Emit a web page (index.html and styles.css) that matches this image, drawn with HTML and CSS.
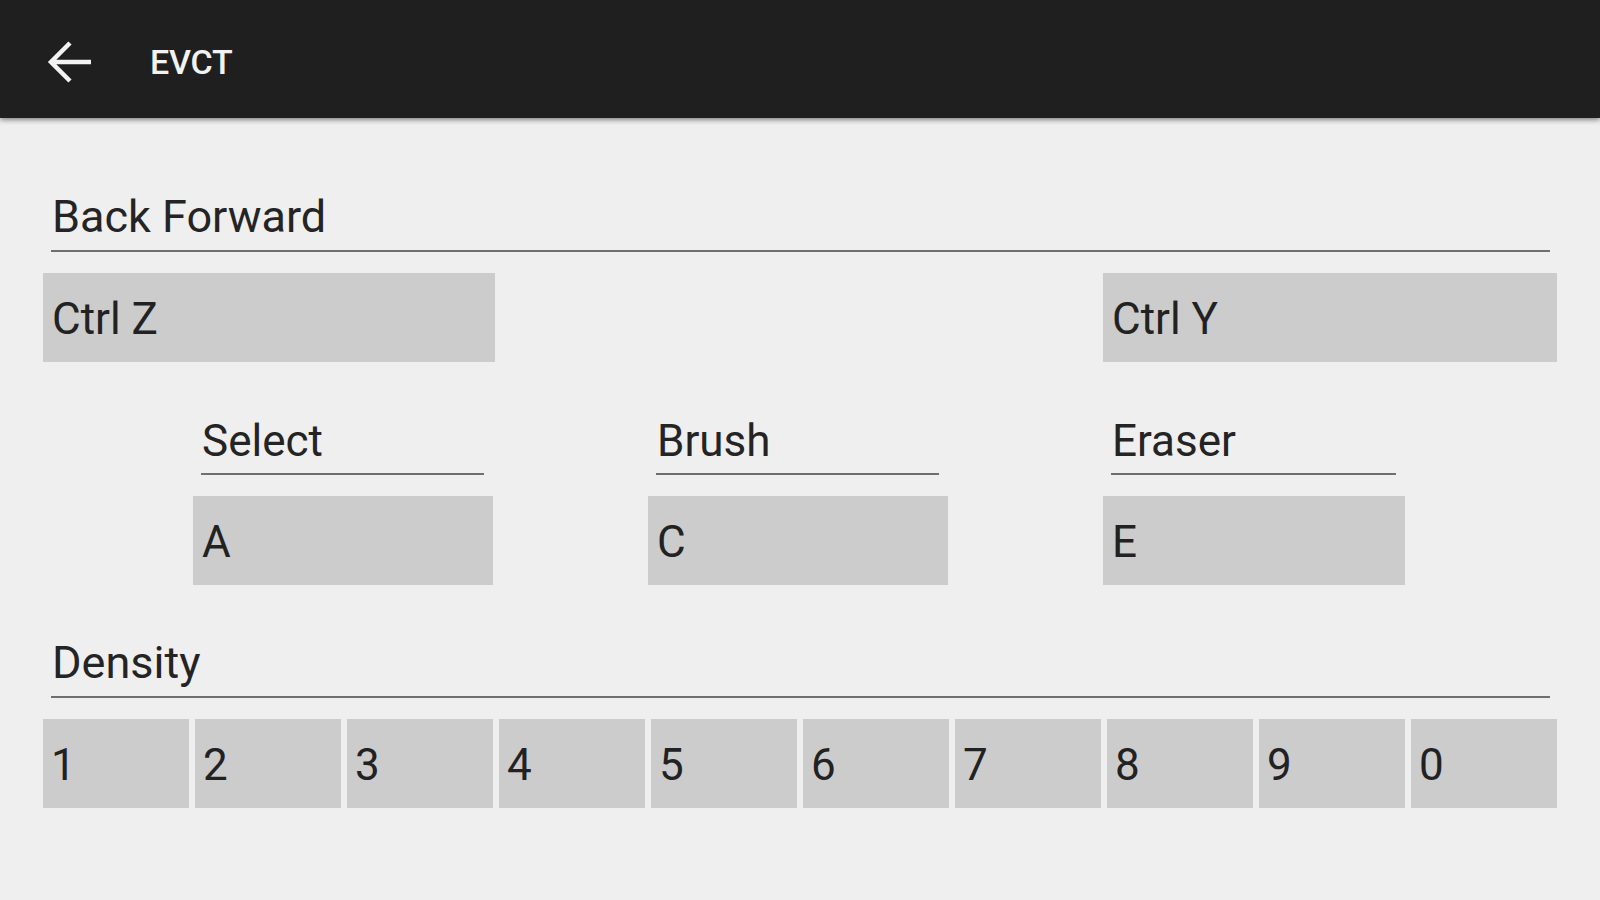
FILE: index.html
```html
<!DOCTYPE html>
<html lang="en">
<head>
<meta charset="utf-8">
<title>EVCT</title>
<link rel="stylesheet" href="styles.css">
</head>
<body>
<header class="appbar">
  <svg class="back" width="48" height="48" viewBox="0 0 48 48" aria-hidden="true">
    <path d="M46 24H6 M25 5L6 24L25 43" fill="none" stroke="#f2f2f2" stroke-width="4.5"/>
  </svg>
  <span class="title">EVCT</span>
</header>
<main class="content">
  <div class="label wide">Back Forward</div>
  <div class="row-pair">
    <div class="key key-ctrlz">Ctrl Z</div>
    <div class="key key-ctrly">Ctrl Y</div>
  </div>
  <div class="tools">
    <div class="tool">
      <div class="label small">Select</div>
      <div class="key">A</div>
    </div>
    <div class="tool">
      <div class="label small">Brush</div>
      <div class="key">C</div>
    </div>
    <div class="tool">
      <div class="label small">Eraser</div>
      <div class="key">E</div>
    </div>
  </div>
  <div class="label wide density">Density</div>
  <div class="digits">
    <div class="key">1</div>
    <div class="key">2</div>
    <div class="key">3</div>
    <div class="key">4</div>
    <div class="key">5</div>
    <div class="key">6</div>
    <div class="key">7</div>
    <div class="key">8</div>
    <div class="key">9</div>
    <div class="key">0</div>
  </div>
</main>
</body>
</html>
```
FILE: styles.css
```css
html, body {
  margin: 0;
  padding: 0;
}
body {
  width: 1600px;
  height: 900px;
  overflow: hidden;
  background: #efefef;
  font-family: Roboto, "Liberation Sans", sans-serif;
  color: #222222;
}
.appbar {
  box-sizing: border-box;
  height: 118px;
  padding: 5px 0 0 45px;
  background: #1f1f1f;
  display: flex;
  align-items: center;
  box-shadow: 0 2px 5px rgba(0, 0, 0, 0.45);
  position: relative;
}
.back {
  display: block;
  flex: none;
}
.title {
  margin-left: 57px;
  font-size: 34px;
  line-height: 34px;
  font-weight: 500;
  color: #f2f2f2;
  letter-spacing: -0.2px;
}
.content {
  padding: 77px 43px 0 43px;
  width: 1514px;
}
.label {
  font-size: 44px;
  line-height: 44px;
  padding-bottom: 11px;
  border-bottom: 2px solid #6f6f6f;
  color: #242424;
}
.label.wide {
  font-size: 45px;
  margin: 0 7px 0 8px;
  padding-left: 1px;
}
.label.small {
  margin: 0 9px 0 8px;
  padding-bottom: 10px;
  padding-left: 1px;
}
.label.density {
  margin-top: 56px;
}
.key {
  box-sizing: border-box;
  height: 89px;
  padding: 5px 0 0 9px;
  line-height: 83px;
  font-size: 44px;
  background: #cccccc;
  color: #222222;
}
.row-pair {
  margin-top: 21px;
  display: flex;
  justify-content: space-between;
}
.key-ctrlz {
  width: 452px;
}
.key-ctrly {
  width: 454px;
}
.tools {
  margin-top: 57px;
  padding-left: 150px;
  display: grid;
  grid-template-columns: 300px 300px 302px;
  column-gap: 155px;
}
.tool .key {
  margin-top: 21px;
}
.digits {
  margin-top: 21px;
  display: grid;
  grid-template-columns: repeat(10, 1fr);
  column-gap: 6px;
}
.digits .key {
  padding-left: 8px;
}
```
